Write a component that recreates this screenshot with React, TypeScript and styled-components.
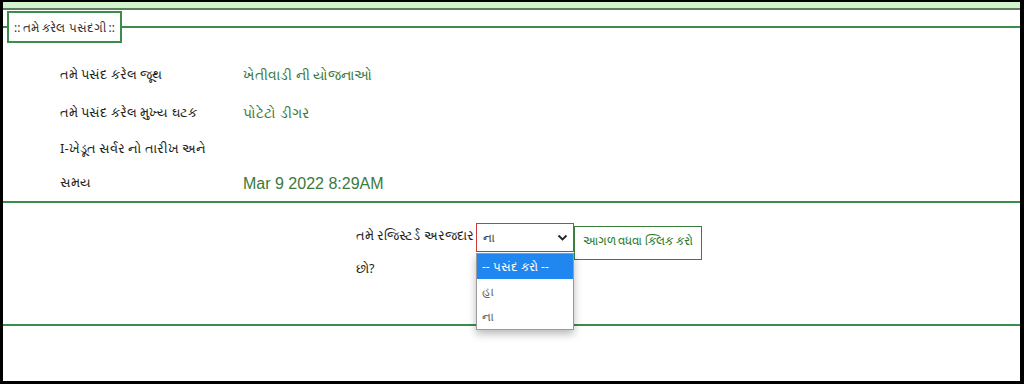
import React from 'react'
import styled, { createGlobalStyle } from 'styled-components'

const GlobalStyle = createGlobalStyle`
  html, body {
    margin: 0;
    padding: 0;
    background: #000;
  }
  body {
    font-family: "Noto Sans", "Liberation Sans", Arial, sans-serif;
  }
`

const GREEN = '#3c8c4c'

const Frame = styled.div`
  box-sizing: border-box;
  width: 1024px;
  height: 384px;
  border-style: solid;
  border-color: #000;
  border-width: 2px 4px 3px 3px;
  background: #fff;
  overflow: hidden;
`

const TopBand = styled.div`
  height: 6px;
  background: #d2f4cd;
  border-bottom: 2px solid #5e7e5e;
`

const Selection = styled.fieldset`
  margin: 1px 0 0 0;
  padding: 12px 0 0 0;
  border: none;
  border-top: 2px solid ${GREEN};
  border-bottom: 2px solid ${GREEN};
  min-width: 0;
`

const Legend = styled.legend`
  margin-left: 4px;
  padding: 0 5px;
  height: 28px;
  line-height: 28px;
  border: 2px solid ${GREEN};
  font-size: 11.8px;
  color: #333;
`

const InfoGrid = styled.div`
  display: grid;
  grid-template-columns: 183px 1fr;
  grid-template-rows: 38px 38px 70px;
  padding-left: 57px;
`

const Label = styled.div<{ $wrap?: boolean }>`
  font-size: 13px;
  color: #1e1e1e;
  line-height: ${p => (p.$wrap ? '34px' : '38px')};
`

const Value = styled.div<{ $bottom?: boolean; $latin?: boolean }>`
  display: flex;
  align-items: ${p => (p.$bottom ? 'flex-end' : 'center')};
  padding-bottom: ${p => (p.$bottom ? '8px' : '0')};
  font-family: ${p => (p.$latin ? '"Liberation Sans", Arial, sans-serif' : 'inherit')};
  font-size: ${p => (p.$latin ? '16px' : '13.8px')};
  color: #3b7a3b;
`

const Question = styled.section`
  height: 123px;
  border-bottom: 2px solid ${GREEN};
  display: flex;
  align-items: flex-start;
  padding: 20px 0 0 353px;
  box-sizing: border-box;
`

const Ask = styled.div`
  width: 120px;
  margin-top: -4px;
  font-size: 12.6px;
  line-height: 33px;
  color: #1e1e1e;
`

const SelectWrap = styled.div`
  position: relative;
  width: 98px;
`

const SelectBox = styled.div`
  box-sizing: border-box;
  height: 29px;
  border: 1px solid #cc3b3b;
  display: flex;
  align-items: center;
  justify-content: space-between;
  padding: 0 5px 0 6px;
  font-size: 12px;
  color: #444;
  background: #fff;
`

const DropList = styled.ul`
  position: absolute;
  top: 30px;
  left: 0;
  width: 98px;
  box-sizing: border-box;
  margin: 0;
  padding: 0;
  list-style: none;
  background: #fff;
  border: 1px solid #9a9a9a;
  box-shadow: 0 4px 8px rgba(0, 0, 0, 0.28);
  z-index: 2;
`

const Option = styled.li<{ $active?: boolean }>`
  height: 25px;
  line-height: 25px;
  padding-left: 5px;
  font-size: 12px;
  color: ${p => (p.$active ? '#fff' : '#666')};
  background: ${p => (p.$active ? '#1f87ef' : 'transparent')};
`

const GoButton = styled.button`
  box-sizing: border-box;
  margin-top: 3px;
  width: 128px;
  height: 34px;
  border: 1px solid #3b7d3b;
  background: #fff;
  color: #2a7a2a;
  font-family: inherit;
  font-size: 11.5px;
  padding: 0 0 6px 0;
`

const Chevron = () => (
  <svg width="11" height="8" viewBox="0 0 11 8" fill="none">
    <path d="M1.5 1.5 L5.5 5.5 L9.5 1.5" stroke="#222" strokeWidth="1.8" />
  </svg>
)

const App = () => {
  return (
    <>
      <GlobalStyle />
      <Frame>
        <TopBand />
        <Selection>
          <Legend>:: તમે કરેલ પસંદગી ::</Legend>
          <InfoGrid>
            <Label>તમે પસંદ કરેલ જૂથ</Label>
            <Value>ખેતીવાડી ની યોજનાઓ</Value>
            <Label>તમે પસંદ કરેલ મુખ્ય ઘટક</Label>
            <Value>પોટેટો ડીગર</Value>
            <Label $wrap>
              I-ખેડૂત સર્વર નો તારીખ અને
              <br />
              સમય
            </Label>
            <Value $bottom $latin>
              Mar 9 2022 8:29AM
            </Value>
          </InfoGrid>
        </Selection>
        <Question>
          <Ask>તમે રજિસ્ટર્ડ અરજદાર છો?</Ask>
          <SelectWrap>
            <SelectBox>
              <span>ના</span>
              <Chevron />
            </SelectBox>
            <DropList>
              <Option $active>-- પસંદ કરો --</Option>
              <Option>હા</Option>
              <Option>ના</Option>
            </DropList>
          </SelectWrap>
          <GoButton>આગળ વધવા ક્લિક કરો</GoButton>
        </Question>
      </Frame>
    </>
  )
}

export default App
